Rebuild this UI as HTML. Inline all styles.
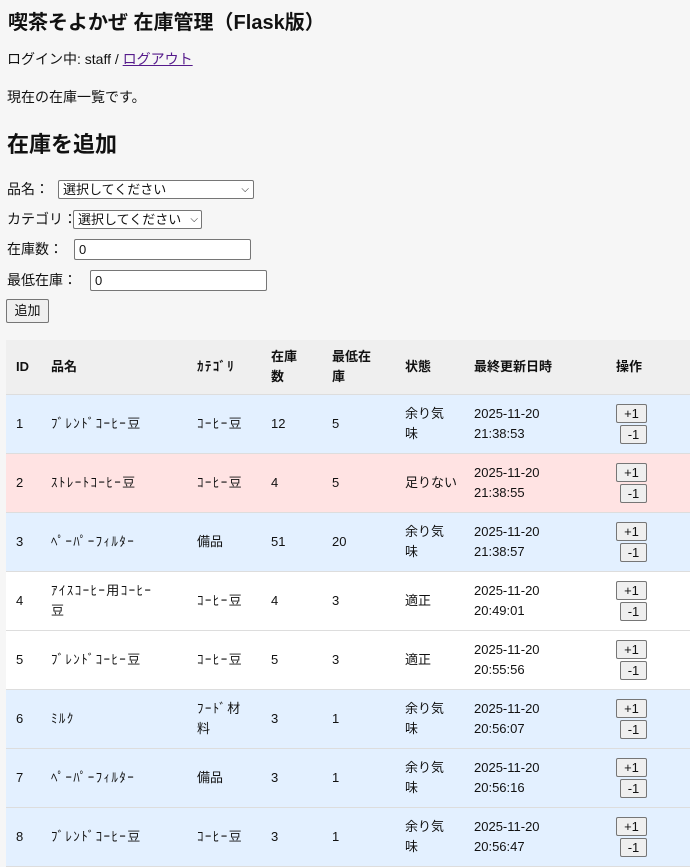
<!DOCTYPE html>
<html><head><meta charset="utf-8"><style>
body{margin:0;background:#f6f6f6;font-family:"Liberation Sans","Noto Sans CJK JP",sans-serif;font-size:14px;color:#111;width:690px;height:861px;overflow:hidden;position:relative}
.a{position:absolute;white-space:nowrap}
h1{font-size:20px;font-weight:bold;margin:0}
h2{font-size:22px;font-weight:bold;margin:0}
a{color:#551a8b}
.sel,.inp{position:absolute;height:17px;border:1px solid #767676;border-radius:2px;background:#fff;font-size:13px;line-height:17px;padding-left:4px;box-sizing:content-box}
.btn{position:absolute;background:#efefef;border:1px solid #767676;border-radius:2px;font-size:13px;text-align:center;box-sizing:border-box}
table{position:absolute;left:6px;top:340px;border-collapse:collapse;width:700px;font-size:13px}
td,th{padding:0 0 0 10px;text-align:left;vertical-align:middle;line-height:20px;position:relative;white-space:nowrap}
th{background:#efefef;height:54px;font-weight:bold;border-bottom:1px solid #ddd}
td{height:58px;border-bottom:1px solid #ddd}
.h{letter-spacing:1.4px}
.b{background:#e3f0ff}.p{background:#ffe3e3}.w{background:#fff}
.op .x{display:block;width:31px;height:19px;margin-left:0;background:#efefef;border:1px solid #767676;border-radius:2px;text-align:center;line-height:17px;box-sizing:border-box;font-size:13px}
.op .y{display:block;width:27px;height:19px;margin:2px 0 0 4px;background:#efefef;border:1px solid #767676;border-radius:2px;text-align:center;line-height:17px;box-sizing:border-box;font-size:13px}
</style></head><body>
<div class="a" style="left:8px;top:6px"><h1>喫茶そよかぜ 在庫管理（Flask版）</h1></div>
<div class="a" style="left:7px;top:49px">ログイン中: staff / <a href="#">ログアウト</a></div>
<div class="a" style="left:7px;top:87px">現在の在庫一覧です。</div>
<div class="a" style="left:7px;top:127px"><h2>在庫を追加</h2></div>
<div class="a" style="left:7px;top:179px">品名：</div>
<div class="sel" style="left:58px;top:180px;width:190px">選択してください<span style="position:absolute;right:4px;font-size:10px">&#x2335;</span></div>
<div class="a" style="left:7px;top:209px">カテゴリ：</div>
<div class="sel" style="left:73px;top:210px;width:123px">選択してください<span style="position:absolute;right:3px;font-size:10px">&#x2335;</span></div>
<div class="a" style="left:7px;top:239px">在庫数：</div>
<div class="inp" style="left:74px;top:239px;width:171px;height:19px;line-height:19px">0</div>
<div class="a" style="left:7px;top:270px">最低在庫：</div>
<div class="inp" style="left:90px;top:270px;width:171px;height:19px;line-height:19px">0</div>
<div class="btn" style="left:6px;top:299px;width:43px;height:24px;line-height:22px">追加</div>
<table>
<tr><th style="width:25px">ID</th><th style="width:136px">品名</th><th style="width:64px" class="h">ｶﾃｺﾞﾘ</th><th style="width:51px">在庫<br>数</th><th style="width:63px">最低在<br>庫</th><th style="width:59px">状態</th><th style="width:132px">最終更新日時</th><th>操作</th></tr>
<tr class="b"><td>1</td><td class="h">ﾌﾞﾚﾝﾄﾞｺｰﾋｰ豆</td><td class="h">ｺｰﾋｰ豆</td><td>12</td><td>5</td><td>余り気<br>味</td><td>2025-11-20<br>21:38:53</td><td class="op"><span class="x">+1</span><span class="y">-1</span></td></tr>
<tr class="p"><td>2</td><td class="h">ｽﾄﾚｰﾄｺｰﾋｰ豆</td><td class="h">ｺｰﾋｰ豆</td><td>4</td><td>5</td><td>足りない</td><td>2025-11-20<br>21:38:55</td><td class="op"><span class="x">+1</span><span class="y">-1</span></td></tr>
<tr class="b"><td>3</td><td class="h">ﾍﾟｰﾊﾟｰﾌｨﾙﾀｰ</td><td>備品</td><td>51</td><td>20</td><td>余り気<br>味</td><td>2025-11-20<br>21:38:57</td><td class="op"><span class="x">+1</span><span class="y">-1</span></td></tr>
<tr class="w"><td>4</td><td class="h">ｱｲｽｺｰﾋｰ用ｺｰﾋｰ<br>豆</td><td class="h">ｺｰﾋｰ豆</td><td>4</td><td>3</td><td>適正</td><td>2025-11-20<br>20:49:01</td><td class="op"><span class="x">+1</span><span class="y">-1</span></td></tr>
<tr class="w"><td>5</td><td class="h">ﾌﾞﾚﾝﾄﾞｺｰﾋｰ豆</td><td class="h">ｺｰﾋｰ豆</td><td>5</td><td>3</td><td>適正</td><td>2025-11-20<br>20:55:56</td><td class="op"><span class="x">+1</span><span class="y">-1</span></td></tr>
<tr class="b"><td>6</td><td class="h">ﾐﾙｸ</td><td class="h">ﾌｰﾄﾞ材<br>料</td><td>3</td><td>1</td><td>余り気<br>味</td><td>2025-11-20<br>20:56:07</td><td class="op"><span class="x">+1</span><span class="y">-1</span></td></tr>
<tr class="b"><td>7</td><td class="h">ﾍﾟｰﾊﾟｰﾌｨﾙﾀｰ</td><td>備品</td><td>3</td><td>1</td><td>余り気<br>味</td><td>2025-11-20<br>20:56:16</td><td class="op"><span class="x">+1</span><span class="y">-1</span></td></tr>
<tr class="b"><td>8</td><td class="h">ﾌﾞﾚﾝﾄﾞｺｰﾋｰ豆</td><td class="h">ｺｰﾋｰ豆</td><td>3</td><td>1</td><td>余り気<br>味</td><td>2025-11-20<br>20:56:47</td><td class="op"><span class="x">+1</span><span class="y">-1</span></td></tr>
</table>
</body></html>
